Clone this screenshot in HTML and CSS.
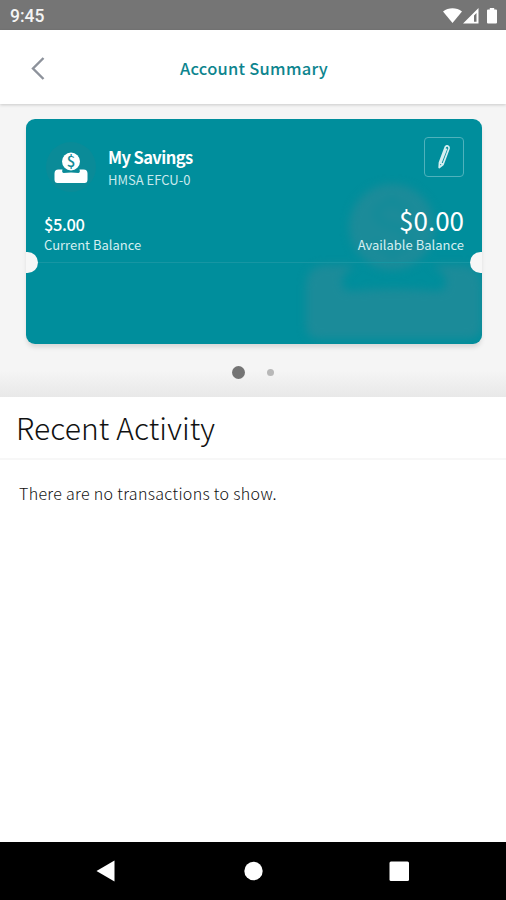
FILE: index.html
```html
<!DOCTYPE html>
<html lang="en">
<head>
    <meta charset="UTF-8">
    <meta name="viewport" content="width=device-width, initial-scale=1.0">
    <title>Account Summary</title>
    <link rel="stylesheet" href="styles.css">
</head>
<body>
    <div class="status-bar">
        <span class="clock">9:45</span>
        <svg class="status-icons" viewBox="0 0 56 18" fill="#fff">
            <path d="M0 4.600C5.500.2 13.500.2 19 4.600L9.500 16z"/>
            <path d="M20 16.500L35.500 1v15.500zM31 14.800h2.500V6L31 8.500z" fill-rule="evenodd"/>
            <path d="M44 3.500q0-1 1-1h1.800V1h4.400v1.500H53q1 0 1 1v12q0 1-1 1h-8q-1 0-1-1z"/>
        </svg>
    </div>

    <header class="header">
        <button class="back-button" aria-label="Back">
            <svg viewBox="0 0 14 24" fill="none" stroke="#8d929b" stroke-width="2.400">
                <path d="M12.500 2L2 12.500L12.500 23"/>
            </svg>
        </button>
        <h1>Account Summary</h1>
    </header>

    <section class="accounts">
        <div class="card">
            <div class="watermark">
                <svg viewBox="0 0 176 160">
                    <circle cx="86" cy="46" r="43"/>
                    <path d="M22 84h28q-14 8-14 18 0 8 10 8 42-4 84 0 10 0 10-8 0-10-14-18h28q22 0 22 22v38q0 14-14 14H14q-14 0-14-14v-38q0-22 22-22z"/>
                    <path class="watermark-sign" d="M102 31q-5-9-16-9-15 0-15 12 0 8 15 11 16 3 16 13 0 12-16 12-12 0-17-9M86 14v8M86 70v9"/>
                </svg>
            </div>
            <div class="card-top">
                <div class="account-icon">
                    <svg viewBox="0 0 34 34" fill="#fff">
                        <path d="M4.500 19.500h4q-1 3 1 3.500 7.500-1.200 15 0 2-.5 1-3.500h4q4 0 4 4v6q0 3.500-3 3.500H3.500q-3 0-3-3.500v-6q0-4 4-4z"/>
                        <circle cx="17" cy="11.500" r="9"/>
                        <text class="coin-sign" x="17" y="17" text-anchor="middle">$</text>
                    </svg>
                </div>
                <div class="account-name">
                    <h2>My Savings</h2>
                    <p>HMSA EFCU-0</p>
                </div>
                <button class="edit-button" aria-label="Edit">
                    <svg viewBox="0 0 12 24" fill="none" stroke="#d6eff1" stroke-width="1.700" stroke-linejoin="round">
                        <path d="M1.200 22.500l.3-5L7.300 2q1-1.600 2.500-1t1.200 2.500L5 19.500zM3 17.500L8.500 3.500M1.500 17.500L5 19.500"/>
                    </svg>
                </button>
            </div>
            <div class="balances">
                <div class="balance">
                    <strong>$5.00</strong>
                    <span>Current Balance</span>
                </div>
                <div class="balance available">
                    <strong>$0.00</strong>
                    <span>Available Balance</span>
                </div>
            </div>
            <div class="tear-line"></div>
        </div>
        <div class="pager">
            <span class="dot active"></span>
            <span class="dot"></span>
        </div>
    </section>

    <main class="activity">
        <h2>Recent Activity</h2>
        <p>There are no transactions to show.</p>
    </main>

    <nav class="nav-bar">
        <svg viewBox="0 0 506 58" fill="#fff">
            <path d="M96.500 29L114.500 18.500v21z"/>
            <circle cx="253.500" cy="29" r="9.200"/>
            <rect x="389.500" y="19.500" width="19.500" height="19.500" rx="1.500"/>
        </svg>
    </nav>
</body>
</html>
```
FILE: styles.css
```css
* {
    margin: 0;
    padding: 0;
    box-sizing: border-box;
}

body {
    font-family: "Noto Sans CJK SC", "Open Sans", sans-serif;
    background: #fff;
    height: 100vh;
    display: flex;
    flex-direction: column;
    overflow: hidden;
}

button {
    background: none;
    border: none;
}

.status-bar {
    height: 30px;
    background: #757575;
    display: flex;
    align-items: center;
    justify-content: space-between;
    padding: 1px 7px 0 10px;
}

.clock {
    font: 500 17.5px/20px Roboto, sans-serif;
    color: #f4f4f4;
}

.status-icons {
    width: 56px;
    height: 18px;
}

.header {
    height: 74px;
    display: grid;
    grid-template-columns: 76px 1fr 74px;
    align-items: center;
    padding-top: 2px;
    background: #fff;
    box-shadow: 0 1px 3px rgba(0, 0, 0, 0.18);
    z-index: 1;
}

.back-button svg {
    display: block;
    width: 14px;
    height: 24px;
    margin: 0 auto;
}

.header h1 {
    font-size: 16.5px;
    line-height: 24px;
    font-weight: 500;
    color: #0d858e;
    text-align: center;
    letter-spacing: 0.25px;
}

.accounts {
    height: 293px;
    padding: 15px 24px 0 26px;
    background: linear-gradient(#f5f5f5 91%, #e8e8e8);
}

.card {
    position: relative;
    height: 225px;
    padding: 18px 18px 0;
    border-radius: 9px;
    background: #008e9c;
    color: #fff;
    box-shadow: 0 4px 5px -1px rgba(0, 0, 0, 0.13);
}

.watermark {
    position: absolute;
    inset: 0;
    overflow: hidden;
    border-radius: 9px;
    display: flex;
    justify-content: flex-end;
    align-items: flex-end;
    padding-bottom: 3px;
}

.watermark svg {
    width: 176px;
    height: 160px;
    fill: #1b8b99;
    filter: blur(4px);
}

.watermark-sign {
    fill: none;
    stroke: #088d9b;
    stroke-width: 5;
    opacity: 0.5;
}

.card-top {
    position: relative;
    display: flex;
    height: 58px;
}

.account-icon {
    width: 50px;
    height: 50px;
    margin: 5px 12px 0 2px;
    border-radius: 50%;
    background: #0a8b98;
    display: flex;
    justify-content: center;
    align-items: center;
}

.account-icon svg {
    width: 34px;
    height: 34px;
}

.coin-sign {
    font-size: 15px;
    font-weight: 500;
    fill: #168b97;
}

.account-name {
    flex: 1;
    padding-top: 8px;
}

.account-name h2 {
    font-size: 16.5px;
    line-height: 24px;
    font-weight: 700;
    letter-spacing: -0.6px;
}

.account-name p {
    font-size: 13px;
    line-height: 22px;
    color: #c9e9ec;
}

.edit-button {
    width: 40px;
    height: 40px;
    border: 1px solid #4fb2bc;
    border-radius: 4px;
    display: flex;
    align-items: center;
    justify-content: center;
}

.edit-button svg {
    width: 12px;
    height: 24px;
}

.balances {
    position: relative;
    display: flex;
    justify-content: space-between;
    align-items: flex-end;
    height: 59px;
}

.balance strong,
.balance span {
    display: block;
}

.balance strong {
    font-size: 16.5px;
    line-height: 23px;
    font-weight: 500;
    letter-spacing: -0.4px;
}

.balance span {
    font-size: 13px;
    line-height: 18px;
    color: #d5eff1;
}

.available {
    text-align: right;
}

.available strong {
    font-size: 26px;
    line-height: 33px;
    font-weight: 400;
    letter-spacing: 0;
}

.tear-line {
    position: relative;
    height: 1px;
    margin: 8px -18px 0;
    background: #1796a3;
}

/* punched notches at both ends of the tear line */
.tear-line::before,
.tear-line::after {
    content: "";
    position: absolute;
    top: -10px;
    width: 12px;
    height: 21px;
    background: #f7f7f7;
}

.tear-line::before {
    left: 0;
    border-radius: 0 11px 11px 0;
}

.tear-line::after {
    right: 0;
    border-radius: 11px 0 0 11px;
}

.pager {
    display: flex;
    align-items: center;
    justify-content: center;
    gap: 22px;
    height: 56px;
    padding-right: 3px;
}

.dot {
    width: 7px;
    height: 7px;
    border-radius: 50%;
    background: #b8b8b8;
}

.dot.active {
    width: 13px;
    height: 13px;
    background: #747474;
}

.activity {
    flex: 1;
    background: #fff;
}

.activity h2 {
    height: 63px;
    padding-left: 16px;
    font-size: 30px;
    line-height: 60px;
    font-weight: 300;
    letter-spacing: 0.1px;
    color: #111;
    border-bottom: 2px solid #f7f7f7;
}

.activity p {
    padding: 21px 19px;
    font-size: 16px;
    line-height: 24px;
    font-weight: 300;
    letter-spacing: 0.32px;
    color: #111;
}

.nav-bar {
    height: 58px;
    background: #000;
}

.nav-bar svg {
    display: block;
    width: 100%;
    height: 58px;
}
```
